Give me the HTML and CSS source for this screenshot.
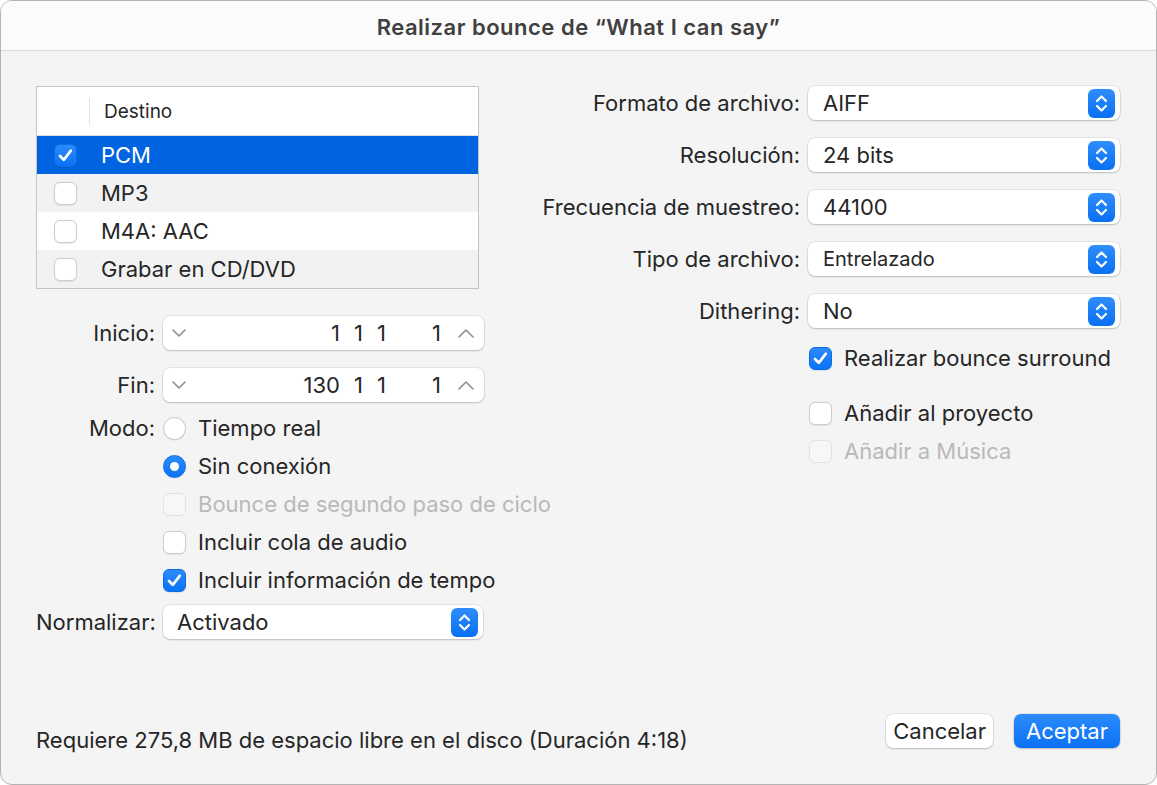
FILE: index.html
```html
<!DOCTYPE html>
<html lang="es">
<head>
<meta charset="utf-8">
<title>Realizar bounce</title>
<link rel="stylesheet" href="styles.css">
</head>
<body>
<div class="window">
  <header class="titlebar">Realizar bounce de “What I can say”</header>
  <main class="content">
    <div class="columns">
      <section class="left">
        <div class="table">
          <div class="thead"><span class="thead-sep"></span><span class="thead-label">Destino</span></div>
          <div class="trow selected"><span class="cb checked"><svg viewBox="0 0 23 23"><path d="M5.5 12 L9.6 16.2 L17.3 6.3"/></svg></span><span>PCM</span></div>
          <div class="trow alt"><span class="cb"></span><span>MP3</span></div>
          <div class="trow"><span class="cb"></span><span>M4A: AAC</span></div>
          <div class="trow alt"><span class="cb"></span><span>Grabar en CD/DVD</span></div>
        </div>

        <div class="frow first-counter">
          <span class="flabel">Inicio:</span>
          <div class="counter">
            <svg class="chev-down" viewBox="0 0 14 8"><path d="M1 1 L7 7 L13 1"/></svg>
            <div class="nums"><span class="s1">1</span><span class="s2">1</span><span class="s3">1</span><span class="s4">1</span></div>
            <svg class="chev-up" viewBox="0 0 16 9"><path d="M1 8 L8 1 L15 8"/></svg>
          </div>
        </div>
        <div class="frow second-counter">
          <span class="flabel">Fin:</span>
          <div class="counter">
            <svg class="chev-down" viewBox="0 0 14 8"><path d="M1 1 L7 7 L13 1"/></svg>
            <div class="nums"><span class="s1">130</span><span class="s2">1</span><span class="s3">1</span><span class="s4">1</span></div>
            <svg class="chev-up" viewBox="0 0 16 9"><path d="M1 8 L8 1 L15 8"/></svg>
          </div>
        </div>

        <div class="modes">
          <div class="frow opt-row"><span class="flabel">Modo:</span><span class="radio"></span><span class="opt-text">Tiempo real</span></div>
          <div class="frow opt-row"><span class="flabel"></span><span class="radio on"></span><span class="opt-text">Sin conexión</span></div>
          <div class="frow opt-row disabled"><span class="flabel"></span><span class="cb"></span><span class="opt-text">Bounce de segundo paso de ciclo</span></div>
          <div class="frow opt-row"><span class="flabel"></span><span class="cb"></span><span class="opt-text">Incluir cola de audio</span></div>
          <div class="frow opt-row"><span class="flabel"></span><span class="cb checked"><svg viewBox="0 0 23 23"><path d="M5.5 12 L9.6 16.2 L17.3 6.3"/></svg></span><span class="opt-text">Incluir información de tempo</span></div>
        </div>

        <div class="frow normalize-row">
          <span class="flabel">Normalizar:</span>
          <div class="popup narrow">
            <span class="popup-text">Activado</span>
            <span class="stepper"><svg viewBox="0 0 26 29"><path d="M8.5 12 L13 7.5 L17.5 12"/><path d="M8.5 17 L13 21.5 L17.5 17"/></svg></span>
          </div>
        </div>
      </section>

      <section class="right">
        <div class="rgrid">
          <span class="rlabel">Formato de archivo:</span>
          <div class="popup"><span class="popup-text">AIFF</span><span class="stepper"><svg viewBox="0 0 26 29"><path d="M8.5 12 L13 7.5 L17.5 12"/><path d="M8.5 17 L13 21.5 L17.5 17"/></svg></span></div>
          <span class="rlabel">Resolución:</span>
          <div class="popup"><span class="popup-text">24 bits</span><span class="stepper"><svg viewBox="0 0 26 29"><path d="M8.5 12 L13 7.5 L17.5 12"/><path d="M8.5 17 L13 21.5 L17.5 17"/></svg></span></div>
          <span class="rlabel">Frecuencia de muestreo:</span>
          <div class="popup"><span class="popup-text">44100</span><span class="stepper"><svg viewBox="0 0 26 29"><path d="M8.5 12 L13 7.5 L17.5 12"/><path d="M8.5 17 L13 21.5 L17.5 17"/></svg></span></div>
          <span class="rlabel">Tipo de archivo:</span>
          <div class="popup"><span class="popup-text small">Entrelazado</span><span class="stepper"><svg viewBox="0 0 26 29"><path d="M8.5 12 L13 7.5 L17.5 12"/><path d="M8.5 17 L13 21.5 L17.5 17"/></svg></span></div>
          <span class="rlabel">Dithering:</span>
          <div class="popup"><span class="popup-text">No</span><span class="stepper"><svg viewBox="0 0 26 29"><path d="M8.5 12 L13 7.5 L17.5 12"/><path d="M8.5 17 L13 21.5 L17.5 17"/></svg></span></div>
        </div>
        <div class="rchecks">
          <div class="check-row surround"><span class="cb checked"><svg viewBox="0 0 23 23"><path d="M5.5 12 L9.6 16.2 L17.3 6.3"/></svg></span><span class="opt-text">Realizar bounce surround</span></div>
          <div class="check-row add-project"><span class="cb"></span><span class="opt-text">Añadir al proyecto</span></div>
          <div class="check-row disabled"><span class="cb"></span><span class="opt-text">Añadir a Música</span></div>
        </div>
      </section>
    </div>

    <footer class="footer">
      <span class="footer-text">Requiere 275,8 MB de espacio libre en el disco (Duración 4:18)</span>
      <div class="buttons">
        <button class="btn">Cancelar</button>
        <button class="btn primary">Aceptar</button>
      </div>
    </footer>
  </main>
</div>
</body>
</html>
```

FILE: styles.css
```css
* { box-sizing: border-box; }
html, body { margin: 0; padding: 0; background: #ffffff; }
body {
  font-family: Inter, "Noto Sans", "Liberation Sans", sans-serif;
  color: #262626;
  font-size: 22px;
}
.window {
  width: 1157px;
  height: 785px;
  border: 1px solid #b3b3b3;
  border-radius: 12px;
  overflow: hidden;
  display: flex;
  flex-direction: column;
  background: #f4f4f4;
}
.titlebar {
  height: 50px;
  flex: none;
  background: #fbfbfb;
  border-bottom: 1px solid #dadada;
  display: flex;
  align-items: center;
  justify-content: center;
  padding-top: 3px;
  font-weight: 600;
  font-size: 22px;
  letter-spacing: 0.5px;
  color: #404040;
}
.content {
  flex: 1;
  display: flex;
  flex-direction: column;
  padding: 35px 36px 0 35px;
}
.columns { display: flex; }
.left { width: 448px; flex: none; }
.right { margin-left: auto; width: 620px; }

/* table */
.table {
  width: 443px;
  background: #ffffff;
  border: 1px solid #c4c4c4;
}
.thead {
  height: 49px;
  border-bottom: 1px solid #dedede;
  display: flex;
  align-items: center;
  font-size: 19px;
}
.thead-sep {
  width: 1px;
  height: 27px;
  background: #e0e0e0;
  margin-left: 52px;
}
.thead-label { margin-left: 14px; }
.trow {
  height: 38px;
  display: flex;
  align-items: center;
  padding-left: 17px;
  gap: 24px;
}
.trow.alt { background: #f2f2f2; }
.trow.selected { background: #0064e1; color: #ffffff; }

/* checkbox & radio */
.cb {
  width: 23px;
  height: 23px;
  flex: none;
  border-radius: 6px;
  background: #ffffff;
  border: 1px solid #cdcdcd;
  box-shadow: 0 0.5px 1px rgba(0,0,0,0.08);
  display: flex;
}
.cb.checked {
  background: linear-gradient(#2c8cfd, #0b72f5);
  border-color: #0a6ee6;
}
.cb svg { width: 100%; height: 100%; }
.cb svg path {
  fill: none;
  stroke: #ffffff;
  stroke-width: 3;
  stroke-linecap: round;
  stroke-linejoin: round;
}
.radio {
  width: 23px;
  height: 23px;
  flex: none;
  border-radius: 50%;
  background: #ffffff;
  border: 1px solid #c8c8c8;
  box-shadow: 0 0.5px 1px rgba(0,0,0,0.08);
  display: flex;
  align-items: center;
  justify-content: center;
}
.radio.on {
  background: linear-gradient(#2c8cfd, #0b72f5);
  border-color: #0a6ee6;
}
.radio.on::after {
  content: "";
  width: 9px;
  height: 9px;
  border-radius: 50%;
  background: #ffffff;
}

/* form rows */
.frow {
  display: flex;
  align-items: center;
}
.flabel {
  width: 119px;
  flex: none;
  text-align: right;
  margin-right: 8px;
  white-space: nowrap;
}
.first-counter { margin-top: 27px; }
.second-counter { margin-top: 18px; }
.counter {
  width: 321px;
  height: 34px;
  background: #ffffff;
  border-radius: 7px;
  box-shadow: 0 0 0 0.5px rgba(0,0,0,0.12), 0 1px 2px rgba(0,0,0,0.18);
  display: flex;
  align-items: center;
  padding: 0 10px 0 9px;
}
.chev-down { width: 14px; height: 8px; flex: none; }
.chev-up { width: 16px; height: 9px; flex: none; margin-left: 17px; }
.counter svg path {
  fill: none;
  stroke: #8e8e8e;
  stroke-width: 1.6;
  stroke-linecap: round;
  stroke-linejoin: round;
}
.nums { display: flex; margin-left: auto; }
.nums span { text-align: right; }
.nums .s1 { width: 45px; }
.nums .s2 { width: 23px; }
.nums .s3 { width: 23px; }
.nums .s4 { width: 55px; }

.modes { margin-top: 7px; }
.opt-row { height: 38px; }
.opt-text { margin-left: 12px; white-space: nowrap; }
.disabled { color: #b9b9b9; }
.disabled .cb { background: #f7f7f7; border-color: #e2e2e2; box-shadow: none; }

.normalize-row { margin-top: 6px; }

/* popups */
.popup {
  width: 312px;
  height: 34px;
  background: #ffffff;
  border-radius: 7px;
  box-shadow: 0 0 0 0.5px rgba(0,0,0,0.12), 0 1px 2px rgba(0,0,0,0.18);
  display: flex;
  align-items: center;
  padding: 0 5px 0 15px;
}
.popup.narrow { width: 320px; padding-left: 14px; }
.popup-text { flex: 1; white-space: nowrap; }
.popup-text.small { font-size: 20px; }
.stepper {
  width: 27px;
  height: 29px;
  border-radius: 6px;
  background: linear-gradient(#2f8efd, #0a6ff3);
  display: flex;
}
.stepper svg { width: 100%; height: 100%; }
.stepper svg path {
  fill: none;
  stroke: #ffffff;
  stroke-width: 2.2;
  stroke-linecap: round;
  stroke-linejoin: round;
}

/* right */
.rgrid {
  display: grid;
  grid-template-columns: 1fr 312px;
  column-gap: 8px;
  row-gap: 18px;
  align-items: center;
}
.rlabel { text-align: right; white-space: nowrap; }
.rchecks { margin-left: 308px; margin-top: 11px; }
.check-row { display: flex; align-items: center; height: 38px; }
.check-row .cb { margin-left: 1px; }
.add-project { margin-top: 17px; }

/* footer */
.footer {
  margin-top: auto;
  display: flex;
  align-items: flex-start;
  padding-bottom: 32px;
}
.footer-text { margin-top: 14px; line-height: 24px; }
.buttons { margin-left: auto; display: flex; gap: 21px; }
.btn {
  font-family: inherit;
  font-size: 22px;
  height: 34px;
  padding: 0 7px;
  min-width: 106px;
  border: none;
  border-radius: 7px;
  background: #ffffff;
  color: #262626;
  box-shadow: 0 0 0 0.5px rgba(0,0,0,0.12), 0 1px 2px rgba(0,0,0,0.18);
}
.btn.primary {
  background: linear-gradient(#2c8cfd, #0b71f3);
  color: #ffffff;
}
```
